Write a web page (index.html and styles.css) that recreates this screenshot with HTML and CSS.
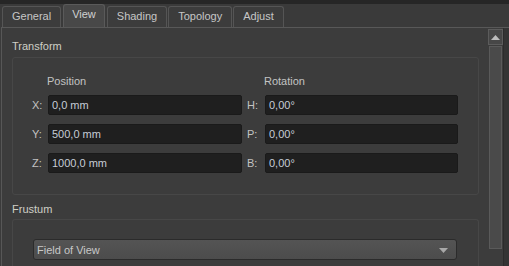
FILE: index.html
```html
<!DOCTYPE html>
<html>
<head>
<meta charset="utf-8">
<link rel="stylesheet" href="styles.css">
</head>
<body>
<div class="app">
  <div class="topbar"></div>
  <div class="tabs">
    <div class="tab">General</div>
    <div class="tab active">View</div>
    <div class="tab">Shading</div>
    <div class="tab">Topology</div>
    <div class="tab">Adjust</div>
  </div>
  <div class="panel">
    <div class="content">
      <div class="section-title">Transform</div>
      <div class="group transform">
        <div class="grid">
          <div></div><div class="col-head">Position</div><div></div><div class="col-head">Rotation</div>
          <div class="lbl">X:</div><div class="field">0,0 mm</div><div class="lbl lbl-r">H:</div><div class="field">0,00°</div>
          <div class="lbl">Y:</div><div class="field">500,0 mm</div><div class="lbl lbl-r">P:</div><div class="field">0,00°</div>
          <div class="lbl">Z:</div><div class="field">1000,0 mm</div><div class="lbl lbl-r">B:</div><div class="field">0,00°</div>
        </div>
      </div>
      <div class="section-title frustum-title">Frustum</div>
      <div class="group frustum">
        <div class="select"><span>Field of View</span><svg class="arrow" width="9" height="5" viewBox="0 0 9 5"><path d="M0 0H9L4.5 5Z" fill="#a8a8a8"/></svg></div>
      </div>
    </div>
    <div class="scrollbar">
      <div class="sb-btn"><svg width="9" height="5" viewBox="0 0 9 5"><path d="M0 5H9L4.5 0Z" fill="#bdbdbd"/></svg></div>
      <div class="sb-thumb"></div>
    </div>
    <div class="edge"></div>
  </div>
</div>
</body>
</html>
```
FILE: styles.css
```css
html, body {
  margin: 0;
  padding: 0;
  background: #3b3b3b;
  overflow: hidden;
}
body {
  width: 509px;
  height: 266px;
  font-family: "Liberation Sans", Arial, sans-serif;
  font-size: 11px;
  color: #c8c8c8;
}
.app {
  display: flex;
  flex-direction: column;
  height: 266px;
  overflow: hidden;
}
.topbar {
  height: 4px;
  background: #262626;
  flex: none;
}
.tabs {
  display: flex;
  align-items: flex-end;
  height: 23px;
  padding-left: 2px;
  gap: 1px;
  background: #3a3a3a;
  flex: none;
}
.tab {
  height: 20px;
  line-height: 19px;
  padding: 0 9px;
  border: 1px solid #555555;
  border-bottom: none;
  border-radius: 3px 3px 0 0;
  background: #3c3c3c;
  color: #c6c6c6;
}
.tab.active {
  height: 22px;
  padding: 0 8px;
  background: #484848;
  color: #d0d0d0;
  border-color: #5a5a5a;
  margin: 0 1px;
}
.panel {
  flex: 1;
  display: flex;
  border-top: 1px solid #585858;
  border-left: 1px solid #575757;
  margin-left: 1px;
  background: #3c3c3c;
  min-height: 0;
  overflow: hidden;
}
.content {
  flex: 1;
  padding: 12px 9px 0 10px;
  min-width: 0;
}
.section-title {
  height: 13px;
  line-height: 13px;
  color: #cfcfc6;
  margin-bottom: 4px;
}
.group {
  border: 1px solid #474747;
  border-radius: 3px;
  background: #3c3c3c;
}
.transform {
  padding: 17px 0 21px 19px;
}
.grid {
  display: grid;
  grid-template-columns: 16px 194px 23px 193px;
  grid-template-rows: 11px 20px 20px 20px;
  row-gap: 9px;
}
.col-head {
  line-height: 13px;
  color: #c3c3c3;
  margin-left: -1px;
}
.lbl {
  line-height: 20px;
  color: #c3c3c3;
}
.lbl-r {
  padding-left: 5px;
}
.field {
  background: #1f1f1f;
  border: 1px solid #1a1a1a;
  border-radius: 2px;
  line-height: 18px;
  padding-left: 3px;
  color: #c6ccd6;
  box-sizing: border-box;
  height: 20px;
}
.frustum-title {
  margin-top: 8px;
  margin-bottom: 3px;
}
.frustum {
  padding: 19px 0 20px 20px;
  border-bottom: none;
  border-radius: 3px 3px 0 0;
}
.select {
  width: 424px;
  height: 21px;
  box-sizing: border-box;
  border: 1px solid #2b2b2b;
  border-radius: 3px;
  background: linear-gradient(#545454, #4c4c4c);
  display: flex;
  align-items: center;
  justify-content: space-between;
  padding: 0 8px 0 3px;
  color: #c8c8c8;
}
.arrow {
  margin-top: 1px;
}
.scrollbar {
  width: 15px;
  flex: none;
  display: flex;
  flex-direction: column;
  padding-top: 1px;
  gap: 1px;
}
.sb-btn {
  height: 14px;
  border: 1px solid #5c5c5c;
  background: #474747;
  display: flex;
  align-items: center;
  justify-content: center;
}
.sb-thumb {
  height: 201px;
  margin: 0 1px;
  border: 1px solid #5a5a5a;
  background: #4a4a4a;
}
.edge {
  width: 5px;
  flex: none;
  background: #343434;
  border-left: 1px solid #2c2c2c;
}
```
